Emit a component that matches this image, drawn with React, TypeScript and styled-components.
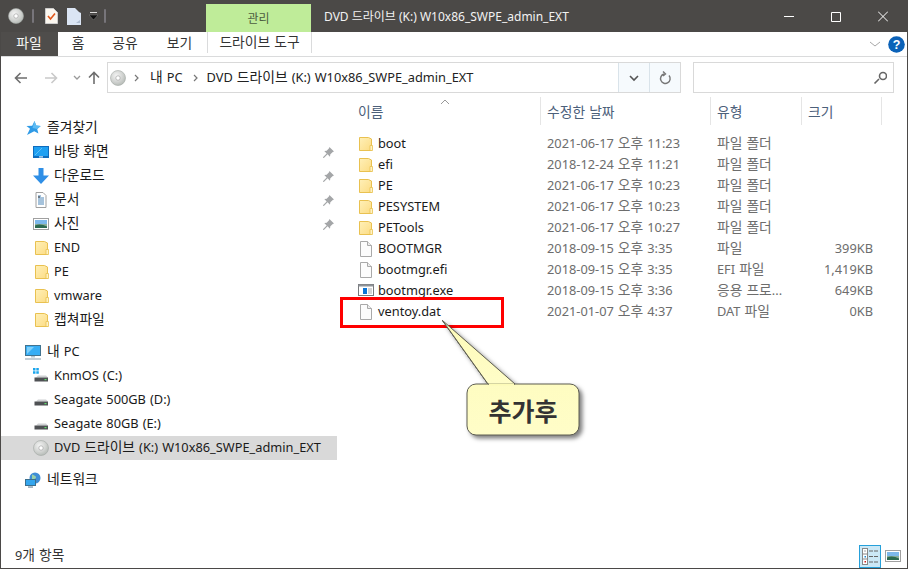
import React from "react";
import styled, { createGlobalStyle } from "styled-components";

const Global = createGlobalStyle`
  html, body { margin: 0; padding: 0; background: #fff; }
  * { box-sizing: border-box; }
  body { font-family: "Noto Sans", "Noto Sans CJK KR", sans-serif; font-size: 12.8px; color: #1a1a1a; }
`;

const Hangul = styled.span`
  font-family: "Noto Sans CJK KR", sans-serif; font-size: 13.8px; line-height: 1;
`;
/* Korean runs are set a little larger than Latin ones, as in the reference */
const T = ({ children }: { children: string }) => (
  <TextRun>
    {children.split(/([\uac00-\ud7a3]+)/).map((part, i) =>
      /[\uac00-\ud7a3]/.test(part) ? <Hangul key={i}>{part}</Hangul> : part
    )}
  </TextRun>
);
const TextRun = styled.span`
  display: inline-block; line-height: 16px; white-space: pre; position: relative; top: -1px; word-spacing: .7px;
`;

const Win = styled.div`
  position: relative; width: 908px; height: 569px; overflow: hidden; display: flex; flex-direction: column;
  border: solid #4b4947; border-width: 0 1px 1px 1px; background: #fff;
`;
const TitleBar = styled.div`
  height: 32px; flex: none; background: #4b4947; display: flex; align-items: stretch; margin: 0 -1px; color: #fff; font-size: 12px;
`;
const Quick = styled.div`
  width: 206px; display: flex; align-items: center; padding-left: 8px; flex: none;
`;
const QSep = styled.span<{ $ml: number; $mr: number }>`
  width: 2px; height: 14px; background: #77757a; margin: 0 ${p => p.$mr}px 0 ${p => p.$ml}px; border-radius: 1px;
`;
const Spacer = styled.span<{ $w: number }>`
  width: ${p => p.$w}px; flex: none;
`;
const ManageTab = styled.div`
  width: 105px; margin-top: 4px; background: #bfec99; color: #4c5c40; display: flex; align-items: center; justify-content: center;
`;
const WinTitle = styled.div`
  flex: 1; padding-left: 13px; display: flex; align-items: center; color: #f2f2f2;
`;
const Controls = styled.div`
  display: flex; align-items: center; padding-right: 20px; gap: 37px;
`;
const RibbonTabs = styled.div`
  height: 25px; flex: none; display: flex; border-bottom: 1px solid #dadbdc; margin-left: -1px;
`;
const FileTab = styled.div`
  width: 58px; background: #4f4d4b; color: #f5f5f5; display: flex; align-items: center; justify-content: center;
`;
const RTab = styled.div<{ $w: number }>`
  width: ${p => p.$w}px; display: flex; align-items: center; justify-content: center; color: #333;
`;
const ToolTab = styled.div`
  width: 105px; height: 21px; display: flex; align-items: center; justify-content: center; color: #333;
  border: solid #dadbdc; border-width: 0 1px;
`;
const RibbonRight = styled.div`
  margin-left: auto; display: flex; align-items: center; gap: 7px; padding-right: 2px;
`;
const AddressRow = styled.div`
  height: 40px; flex: none; display: flex; align-items: center; padding: 5px 13px 4px 0;
`;
const Nav = styled.div`
  width: 106px; flex: none; display: flex; align-items: center; padding-left: 13px;
`;
const AddrBox = styled.div`
  width: 574px; height: 31px; border: 1px solid #d9d9d9; display: flex; align-items: center; flex: none;
`;
const Crumbs = styled.div`
  flex: 1; display: flex; align-items: center; padding-left: 2px; color: #222; white-space: pre;
`;
const Crumb = styled.span<{ $ml: number }>`
  margin-left: ${p => p.$ml}px; display: flex;
`;
const AddrBtn = styled.div`
  width: 31px; height: 29px; background: #f6fafd; border-left: 1px solid #d9e3ea; display: flex; align-items: center; justify-content: center;
`;
const SearchBox = styled.div`
  width: 202px; height: 31px; margin-left: 12px; border: 1px solid #d9d9d9; display: flex; align-items: center; justify-content: flex-end; padding-right: 6px;
`;
const Body = styled.div`
  flex: 1; display: flex; min-height: 0;
`;
const Side = styled.div`
  width: 336px; flex: none; padding-top: 19px; display: flex; flex-direction: column;
`;
const SideRow = styled.div<{ $child?: boolean; $sel?: boolean; $gap?: boolean }>`
  height: 24px; flex: none; display: flex; align-items: center;
  padding-left: ${p => (p.$child ? 32 : 24)}px; gap: ${p => (p.$child ? 5 : 6)}px;
  margin-top: ${p => (p.$gap ? 8 : 0)}px;
  background: ${p => (p.$sel ? "#d9d9d9" : "transparent")};
  color: #1a1a1a; white-space: pre;
`;
const SidePin = styled.span`
  margin-left: auto; margin-right: 3px; display: flex;
`;
const SideFolderWrap = styled.span`
  display: flex; margin-left: 2px;
`;
const Main = styled.div`
  flex: 1; display: flex; flex-direction: column; position: relative; min-width: 0;
`;
const Head = styled.div`
  height: 32px; flex: none; display: flex; position: relative; color: #4c607a;
`;
const HeadCell = styled.div<{ $w: number; $sep?: boolean }>`
  width: ${p => p.$w}px; flex: none; height: 28px; padding-left: ${p => (p.$sep ? 6 : 21)}px; display: flex; align-items: center; padding-top: 4px;
  border-right: 1px solid #e5e5e5;
`;
const SortMark = styled.span`
  position: absolute; left: 103px; top: 2px; display: flex;
`;
const List = styled.div`
  display: flex; flex-direction: column; padding-top: 4px;
`;
const Row = styled.div`
  height: 21px; display: grid; grid-template-columns: 18px 169px 170px 91px 65px; padding-left: 23px; align-items: center; white-space: pre;
`;
const IconCell = styled.span<{ $wide?: boolean }>`
  display: flex; align-items: center; margin-left: ${p => (p.$wide ? -2 : -1)}px;
`;
const Name = styled.span`
  color: #1a1a1a;
`;
const Meta = styled.span`
  color: #6d6d6d;
`;
const Size = styled(Meta)`
  text-align: right;
`;
const Status = styled.div`
  height: 24px; flex: none; display: flex; align-items: center; padding: 0 6px 0 14px; color: #333;
`;
const Views = styled.div`
  margin-left: auto; display: flex; align-items: center; gap: 4px;
`;
const ViewOn = styled.div`
  width: 22px; height: 23px; border: 1px solid #26a0da; background: #cbe8f6; display: flex; align-items: center; justify-content: center;
`;
const RedBox = styled.div`
  position: absolute; left: 339px; top: 297px; width: 164px; height: 31px; border: 3px solid #f00;
`;
const Callout = styled.div`
  position: absolute; left: 435px; top: 316px; width: 152px; height: 126px;
`;
const CalloutShape = styled.svg`
  filter: drop-shadow(3px 3px 2px rgba(0,0,0,.5));
`;
const CalloutLabel = styled.div`
  position: absolute; left: 31px; top: 68px; width: 112px; height: 51px; display: flex; align-items: center; justify-content: center;
  font: 700 25px "Noto Sans CJK KR", sans-serif; color: #333;
`;

const Folder = () => (
  <svg width="14" height="16" viewBox="0 0 14 16">
    <defs><linearGradient id="fg" x1="0" y1="0" x2="1" y2="1"><stop offset="0" stopColor="#fff0b8" /><stop offset="1" stopColor="#fcdc84" /></linearGradient></defs>
    <path d="M.5 1.5h9l3 1.5v11.500h-12z" fill="url(#fg)" stroke="#e9c150" />
    <path d="M11 9.500h2.500v5H11z" fill="#fff2c4" stroke="#e9c150" strokeWidth=".8" />
  </svg>
);
const SideFolder = () => <SideFolderWrap><Folder /></SideFolderWrap>;
const FileI = () => (
  <svg width="14" height="16" viewBox="0 0 14 16">
    <path d="M1.500.5h7l4 4v11h-11z" fill="#fcfcfc" stroke="#a9a9a9" />
    <path d="M8.500.5v4h4" fill="#eee" stroke="#a9a9a9" />
  </svg>
);
const ExeI = () => (
  <svg width="17" height="13" viewBox="0 0 17 13">
    <rect x=".5" y=".5" width="15" height="11" fill="#fff" stroke="#77797c" />
    <rect x=".5" y=".5" width="15" height="2" fill="#8f9398" />
    <rect x="5" y="4" width="4" height="6" fill="#0a74d6" />
    <path d="M10 5h4M10 7h4M10 9h4" stroke="#aaa" />
  </svg>
);
const Disc = ({ s = 16 }: { s?: number }) => (
  <svg width={s} height={s} viewBox="0 0 16 16">
    <defs><radialGradient id="dg" cx=".4" cy=".35" r=".8"><stop offset="0" stopColor="#f4f4f4" /><stop offset=".5" stopColor="#d2d4d2" /><stop offset="1" stopColor="#a9b0aa" /></radialGradient></defs>
    <circle cx="8" cy="8" r="7.500" fill="url(#dg)" stroke="#a3a8a4" strokeWidth=".6" />
    <circle cx="8" cy="8" r="2.200" fill="#fff" stroke="#999" strokeWidth=".6" />
  </svg>
);
const Hdd = ({ win }: { win?: boolean }) => (
  <svg width="16" height="16" viewBox="0 0 16 16">
    {win && <path d="M0 0h2.500v2.500H0zM3.300 0h2.500v2.500H3.300zM0 3.300h2.500v2.500H0zM3.300 3.300h2.500v2.500H3.300z" fill="#1aa5ec" />}
    <path d="M3 9.500 L5 7.500h8l2 2z" fill="#cfd1d3" />
    <rect x="1.500" y="9.500" width="13.500" height="4" fill="#4f5154" />
    <rect x="11.500" y="11" width="2" height="1.200" fill="#5ee06a" />
  </svg>
);
const Star = () => (
  <svg width="16" height="16" viewBox="0 0 16 16">
    <path d="M9.500 1l1.700 4.500 4.500.4-3.500 3 1.200 4.600-4.200-2.300L2 15l3-6.300L1.500 6l5.700-.3z" fill="#2e9ae6" />
    <path d="M9.500 1l1.700 4.500 4.500.4-3.500 3L7.500 8z" fill="#5fbcf3" />
  </svg>
);
const Desktop = () => (
  <svg width="16" height="12" viewBox="0 0 16 12">
    <rect width="16" height="12" fill="#0f6cbd" />
    <rect x="1" y="1" width="14" height="9" fill="#1fa0f2" />
    <path d="M2 9L9 2" stroke="#5fc1f6" />
    <rect x="6" y="10.400" width="4" height="1" fill="#fff" />
  </svg>
);
const Down = () => (
  <svg width="16" height="16" viewBox="0 0 16 16">
    <path d="M5.500 0h5v7.500H16L8 16 0 7.500h5.500z" fill="#2f8fe6" />
  </svg>
);
const DocI = () => (
  <svg width="16" height="16" viewBox="0 0 16 16">
    <path d="M3 .5h7l3 3v12H3z" fill="#fff" stroke="#a0a0a0" />
    <path d="M5 4h3M5 6h6M5 8h6M5 10h6M5 12h6" stroke="#4d86b8" />
    <path d="M5 5h2" stroke="#333" />
  </svg>
);
const Pic = () => (
  <svg width="16" height="12" viewBox="0 0 16 12">
    <rect x=".5" y=".5" width="15" height="11" fill="#fff" stroke="#a0a0a0" />
    <rect x="2" y="2" width="12" height="4" fill="#7db8ea" />
    <rect x="2" y="6" width="12" height="4" fill="#8cae9a" />
    <path d="M2 7.500c4-2 8-1 12 1V10H2z" fill="#2c6a50" />
  </svg>
);
const Pin = () => (
  <svg width="11" height="11" viewBox="0 0 12 12">
    <path d="M7 0l5 5-1.300 .4L8 8l-.4 2.600L5 8l-3.800 3.800L0 12l.2-1.200L4 7 1.400 4.400 4 4l2.600-2.700z" fill="#a4a6a8" />
  </svg>
);
const PC = () => (
  <svg width="16" height="15" viewBox="0 0 16 15">
    <rect x=".5" y=".5" width="15" height="10" fill="#38aef5" stroke="#42738f" />
    <path d="M2 9L9 2H2z" fill="#7fd0fa" />
    <rect x="6" y="11" width="4" height="1.500" fill="#b6c6d0" />
    <rect x="0" y="13" width="16" height="2" fill="#c3ced6" />
  </svg>
);
const Net = () => (
  <svg width="16" height="16" viewBox="0 0 16 16">
    <circle cx="10" cy="6" r="5.500" fill="#3f8ed6" />
    <path d="M7 2.500c2 1 4 1 4 3s-3 1-4 3z" fill="#9ad0a8" />
    <rect x=".5" y="7.500" width="10" height="6" fill="#34a6ee" stroke="#3c6f8e" />
    <rect x="3" y="14.300" width="5" height="1.500" fill="#8fa5b5" />
  </svg>
);
const Check = () => (
  <svg width="13" height="16" viewBox="0 0 13 16">
    <path d="M.5.5h8l4 4v11H.500z" fill="#fbf7ef" stroke="#ccc" />
    <path d="M3 8l2.500 3L10 5.500" fill="none" stroke="#e0571c" strokeWidth="1.600" />
  </svg>
);
const Blank = () => (
  <svg width="14" height="17" viewBox="0 0 14 17">
    <path d="M0 0h8l4 4 2 1v12H0z" fill="#dbe5f4" />
    <path d="M9 15l4-3v3z" fill="#aebcd0" />
  </svg>
);
const QuickDrop = () => (
  <svg width="9" height="8" viewBox="0 0 9 8">
    <rect x="1" y="0" width="7" height="1" fill="#ddd" />
    <path d="M0 3h9L4.500 8z" fill="#111" stroke="#999" strokeWidth=".4" />
  </svg>
);
const Line = ({ d, w = 14, h = 14, c = "#fff", sw = 1 }: { d: string; w?: number; h?: number; c?: string; sw?: number }) => (
  <svg width={w} height={h} viewBox={`0 0 ${w} ${h}`}>
    <path d={d} fill="none" stroke={c} strokeWidth={sw} />
  </svg>
);
const Help = () => (
  <svg width="17" height="17" viewBox="0 0 17 17">
    <circle cx="8.500" cy="8.500" r="8.300" fill="#0b62b8" />
    <text x="8.500" y="13" textAnchor="middle" fontSize="12.500" fontWeight="700" fontFamily="Liberation Sans, sans-serif" fill="#fff">?</text>
  </svg>
);
const DetailsView = () => (
  <svg width="16" height="17" viewBox="0 0 16 17">
    <rect x=".5" y=".5" width="5" height="16" fill="#fff" stroke="#888" />
    <path d="M1 6h4M1 11h4" stroke="#888" />
    <rect x="2.500" y="2.500" width="1" height="1" fill="#444" />
    <rect x="2.500" y="8" width="1.500" height="1.500" fill="#1a8ad0" />
    <rect x="2.500" y="13" width="1.500" height="1.500" fill="#d02020" />
    <path d="M7 3h4M12 3h4M7 8.500h4M12 8.500h4M7 14h4M12 14h4" stroke="#666" />
  </svg>
);

type F = { n: string; d: string; t: string; s?: string; i: "folder" | "file" | "exe" };
const files: F[] = [
  { n: "boot", d: "2021-06-17 오후 11:23", t: "파일 폴더", i: "folder" },
  { n: "efi", d: "2018-12-24 오후 11:21", t: "파일 폴더", i: "folder" },
  { n: "PE", d: "2021-06-17 오후 10:23", t: "파일 폴더", i: "folder" },
  { n: "PESYSTEM", d: "2021-06-17 오후 10:23", t: "파일 폴더", i: "folder" },
  { n: "PETools", d: "2021-06-17 오후 10:27", t: "파일 폴더", i: "folder" },
  { n: "BOOTMGR", d: "2018-09-15 오후 3:35", t: "파일", s: "399KB", i: "file" },
  { n: "bootmgr.efi", d: "2018-09-15 오후 3:35", t: "EFI 파일", s: "1,419KB", i: "file" },
  { n: "bootmgr.exe", d: "2018-09-15 오후 3:36", t: "응용 프로...", s: "649KB", i: "exe" },
  { n: "ventoy.dat", d: "2021-01-07 오후 4:37", t: "DAT 파일", s: "0KB", i: "file" },
];

export default function App() {
  return (
    <Win>
      <Global />
      <TitleBar>
        <Quick>
          <Disc />
          <QSep $ml={8} $mr={11} />
          <Check />
          <Spacer $w={9} />
          <Blank />
          <Spacer $w={8} />
          <QuickDrop />
          <QSep $ml={6} $mr={0} />
        </Quick>
        <ManageTab>관리</ManageTab>
        <WinTitle>DVD 드라이브 (K:) W10x86_SWPE_admin_EXT</WinTitle>
        <Controls>
          <Line d="M0 7.500h10" w={10} />
          <Line d="M.5 3.500h9v9h-9z" w={10} />
          <Line d="M0 2.500l10 10M10 2.500l-10 10" w={10} />
        </Controls>
      </TitleBar>
      <RibbonTabs>
        <FileTab><T>파일</T></FileTab>
        <RTab $w={40}><T>홈</T></RTab>
        <RTab $w={54}><T>공유</T></RTab>
        <RTab $w={55}><T>보기</T></RTab>
        <ToolTab><T>드라이브 도구</T></ToolTab>
        <RibbonRight>
          <Line d="M1 5l5 4 5-4" w={12} c="#a8a8a8" />
          <Help />
        </RibbonRight>
      </RibbonTabs>
      <AddressRow>
        <Nav>
          <Line d="M13 7H1.500M6.500 2l-5 5 5 5" c="#6e6e6e" sw={1.6} />
          <Spacer $w={16} />
          <Line d="M1 7h11.500M7.500 2l5 5-5 5" c="#c9c9c9" sw={1.6} />
          <Spacer $w={15} />
          <Line d="M1 5l3 3 3-3" w={8} c="#9a9a9a" sw={1.3} />
          <Spacer $w={6} />
          <Line d="M7 13V1.500M2 6.500l5-5 5 5" c="#6e6e6e" sw={1.6} />
        </Nav>
        <AddrBox>
          <Crumbs>
            <Disc />
            <Crumb $ml={8}><Line d="M1 1l3 3-3 3" w={6} h={8} c="#777" sw={1.2} /></Crumb>
            <Crumb $ml={10}><T>내 PC</T></Crumb>
            <Crumb $ml={10}><Line d="M1 1l3 3-3 3" w={6} h={8} c="#777" sw={1.2} /></Crumb>
            <Crumb $ml={8}><T>DVD 드라이브 (K:) W10x86_SWPE_admin_EXT</T></Crumb>
          </Crumbs>
          <AddrBtn><Line d="M2 5l4 4 4-4" w={12} c="#555" sw={1.6} /></AddrBtn>
          <AddrBtn><Line d="M11 4.500A4.800 4.800 0 1 1 6 3M5 .5 7.500 3 5 5" c="#777" sw={1.4} /></AddrBtn>
        </AddrBox>
        <SearchBox>
          <Line d="M1.500 12.500L6 8M6.500 5a3.500 3.500 0 1 0 7 0a3.500 3.500 0 1 0-7 0" c="#666" sw={1.6} />
        </SearchBox>
      </AddressRow>
      <Body>
        <Side>
          <SideRow><Star /><T>즐겨찾기</T></SideRow>
          <SideRow $child><Desktop /><T>바탕 화면</T><SidePin><Pin /></SidePin></SideRow>
          <SideRow $child><Down /><T>다운로드</T><SidePin><Pin /></SidePin></SideRow>
          <SideRow $child><DocI /><T>문서</T><SidePin><Pin /></SidePin></SideRow>
          <SideRow $child><Pic /><T>사진</T><SidePin><Pin /></SidePin></SideRow>
          <SideRow $child><SideFolder /><T>END</T></SideRow>
          <SideRow $child><SideFolder /><T>PE</T></SideRow>
          <SideRow $child><SideFolder /><T>vmware</T></SideRow>
          <SideRow $child><SideFolder /><T>캡쳐파일</T></SideRow>
          <SideRow $gap><PC /><T>내 PC</T></SideRow>
          <SideRow $child><Hdd win /><T>KnmOS (C:)</T></SideRow>
          <SideRow $child><Hdd /><T>Seagate 500GB (D:)</T></SideRow>
          <SideRow $child><Hdd /><T>Seagate 80GB (E:)</T></SideRow>
          <SideRow $child $sel><Disc /><T>DVD 드라이브 (K:) W10x86_SWPE_admin_EXT</T></SideRow>
          <SideRow $gap><Net /><T>네트워크</T></SideRow>
        </Side>
        <Main>
          <Head>
            <SortMark><Line d="M1 5l4-4 4 4" w={10} h={6} c="#999" /></SortMark>
            <HeadCell $w={204}><T>이름</T></HeadCell>
            <HeadCell $w={170} $sep><T>수정한 날짜</T></HeadCell>
            <HeadCell $w={91} $sep><T>유형</T></HeadCell>
            <HeadCell $w={80} $sep><T>크기</T></HeadCell>
          </Head>
          <List>
            {files.map(f => (
              <Row key={f.n}>
                <IconCell $wide={f.i === "exe"}>{f.i === "folder" ? <Folder /> : f.i === "exe" ? <ExeI /> : <FileI />}</IconCell>
                <Name><T>{f.n}</T></Name>
                <Meta><T>{f.d}</T></Meta>
                <Meta><T>{f.t}</T></Meta>
                <Size>{f.s ? <T>{f.s}</T> : null}</Size>
              </Row>
            ))}
          </List>
        </Main>
      </Body>
      <Status>
        <T>9개 항목</T>
        <Views>
          <ViewOn><DetailsView /></ViewOn>
          <Pic />
        </Views>
      </Status>
      <RedBox />
      <Callout>
        <CalloutShape width="152" height="126" viewBox="0 0 152 126">
          <defs><linearGradient id="cg" x1="0" y1="0" x2="0" y2="1"><stop offset="0" stopColor="#fdfbb8" /><stop offset="1" stopColor="#fffdc8" /></linearGradient></defs>
          <path d="M6.500 4.500L52 68H134a9 9 0 0 1 9 9v33a9 9 0 0 1-9 9H40a9 9 0 0 1-9-9V77a9 9 0 0 1 9-9H52z" fill="url(#cg)" stroke="#5c5c50" strokeWidth="1" />
          <path d="M6.500 4.500L52 68H79z" fill="url(#cg)" stroke="#5c5c50" strokeWidth="1" />
          <path d="M53 68.500h25" stroke="#fdfbb8" strokeWidth="2" />
        </CalloutShape>
        <CalloutLabel>추가후</CalloutLabel>
      </Callout>
    </Win>
  );
}
